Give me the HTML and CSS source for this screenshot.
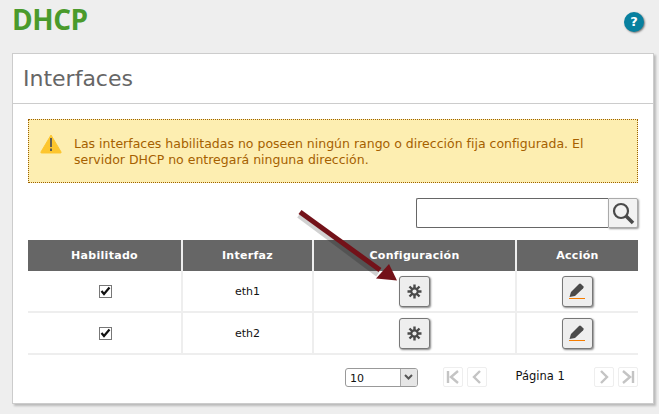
FILE: index.html
```html
<!DOCTYPE html>
<html lang="es">
<head>
<meta charset="utf-8">
<title>DHCP</title>
<link rel="stylesheet" href="styles.css">
</head>
<body>
<header class="top">
  <h1 class="title">DHCP</h1>
  <span class="help">?</span>
</header>
<section class="panel">
  <h2 class="panel-title">Interfaces</h2>
  <div class="panel-body">
    <div class="alert">
      <svg class="alert-icon" width="22" height="20" viewBox="0 0 24 20" preserveAspectRatio="none"><path d="M12 1 L23 18 Q23.500 19 22 19 L2 19 Q.5 19 1 18 Z" fill="#fdc62e" stroke="#fdc62e" stroke-linejoin="round"/><rect x="11" y="4" width="2" height="9" fill="#555"/><rect x="11" y="14.500" width="2" height="2.500" fill="#555"/></svg>
      <p class="alert-text">Las interfaces habilitadas no poseen ningún rango o dirección fija configurada. El servidor DHCP no entregará ninguna dirección.</p>
    </div>
    <div class="search">
      <input class="search-input" type="text" aria-label="Buscar">
      <button class="search-btn" aria-label="Buscar"><svg width="24" height="24" viewBox="0 0 24 24"><circle cx="10" cy="10" r="7" fill="none" stroke="#4a4a4a" stroke-width="2.200"/><path d="M15 15 L22 22" stroke="#4a4a4a" stroke-width="3.500"/></svg></button>
    </div>
    <table class="grid">
      <thead>
        <tr><th class="c1">Habilitado</th><th class="c2">Interfaz</th><th class="c3">Configuración</th><th class="c4">Acción</th></tr>
      </thead>
      <tbody>
        <tr>
          <td><span class="check"><svg width="11" height="10" viewBox="0 0 11 10"><path d="M1.500 5 L4 8 L9.500 1.500" fill="none" stroke="#111" stroke-width="2.200"/></svg></span></td>
          <td>eth1</td>
          <td><button class="icon-btn"><svg width="15" height="15" viewBox="0 0 15 15"><g stroke="#4a4a4a" stroke-width="2.400"><path d="M7.500 .5 V14.500 M.5 7.500 H14.500 M2.500 2.500 L12.500 12.500 M12.500 2.500 L2.500 12.500"/></g><circle cx="7.500" cy="7.500" r="4.200" fill="#4a4a4a"/><circle cx="7.500" cy="7.500" r="2.100" fill="#eee"/></svg></button></td>
          <td><button class="icon-btn"><svg width="17" height="17" viewBox="0 0 17 17"><path d="M0.500 14 L2 9 L10 1 Q11 0 12 1 L14.500 3.500 Q15 4.500 14 5.500 L6 13 Z" fill="#4a4a4a"/><path d="M0 15.500 H16" stroke="#f57c00" stroke-width="1"/></svg></button></td>
        </tr>
        <tr>
          <td><span class="check"><svg width="11" height="10" viewBox="0 0 11 10"><path d="M1.500 5 L4 8 L9.500 1.500" fill="none" stroke="#111" stroke-width="2.200"/></svg></span></td>
          <td>eth2</td>
          <td><button class="icon-btn"><svg width="15" height="15" viewBox="0 0 15 15"><g stroke="#4a4a4a" stroke-width="2.400"><path d="M7.500 .5 V14.500 M.5 7.500 H14.500 M2.500 2.500 L12.500 12.500 M12.500 2.500 L2.500 12.500"/></g><circle cx="7.500" cy="7.500" r="4.200" fill="#4a4a4a"/><circle cx="7.500" cy="7.500" r="2.100" fill="#eee"/></svg></button></td>
          <td><button class="icon-btn"><svg width="17" height="17" viewBox="0 0 17 17"><path d="M0.500 14 L2 9 L10 1 Q11 0 12 1 L14.500 3.500 Q15 4.500 14 5.500 L6 13 Z" fill="#4a4a4a"/><path d="M0 15.500 H16" stroke="#f57c00" stroke-width="1"/></svg></button></td>
        </tr>
      </tbody>
    </table>
    <div class="pager">
      <div class="select"><span class="select-value">10</span><span class="select-arrow"><svg width="9" height="6" viewBox="0 0 9 6"><path d="M1 1 L4.500 4.500 L8 1" fill="none" stroke="#555" stroke-width="2"/></svg></span></div>
      <div class="nav nav-left">
        <span class="nav-btn"><svg width="14" height="14" viewBox="0 0 14 14"><path d="M2 1 V13 M12 1 L5 7 L12 13" fill="none" stroke="#c4c4c4" stroke-width="2.400"/></svg></span>
        <span class="nav-btn"><svg width="14" height="14" viewBox="0 0 14 14"><path d="M10 1 L4 7 L10 13" fill="none" stroke="#c4c4c4" stroke-width="2.400"/></svg></span>
      </div>
      <span class="page-label">Página 1</span>
      <div class="nav">
        <span class="nav-btn"><svg width="14" height="14" viewBox="0 0 14 14"><path d="M4 1 L10 7 L4 13" fill="none" stroke="#c4c4c4" stroke-width="2.400"/></svg></span>
        <span class="nav-btn"><svg width="14" height="14" viewBox="0 0 14 14"><path d="M12 1 V13 M2 1 L9 7 L2 13" fill="none" stroke="#c4c4c4" stroke-width="2.400"/></svg></span>
      </div>
    </div>
  </div>
</section>
<svg class="arrow" width="110" height="90" viewBox="0 0 110 90">
  <path d="M-1 5 L78 64" stroke="#000" stroke-opacity=".18" stroke-width="6"/>
  <path d="M0 2 L80 60" stroke="#731219" stroke-width="5"/>
  <path d="M97 70.500 L76 68.500 L89 54 Z" fill="#731219"/>
</svg>
</body>
</html>
```
FILE: styles.css
```css
* { box-sizing: border-box; }
html, body { margin: 0; height: 414px; overflow: hidden; }
body { background: #eee; font-family: "DejaVu Sans", sans-serif; font-size: 11px; color: #111; position: relative; }
.top { height: 53px; display: flex; justify-content: space-between; padding: 0 15px 0 12px; }
.title { margin: 2px 0 0; font-size: 28px; line-height: 34px; font-weight: 700; color: #4a9a2c; font-family: "Open Sans", sans-serif; letter-spacing: -.5px; }
.help { margin-top: 12px; width: 20px; height: 20px; border-radius: 50%; background: #08809f; color: #fff; font-weight: 700; font-size: 13px; line-height: 20px; text-align: center; box-shadow: 1px 1px 2px #777; }
.panel { margin: 0 5px 0 12px; height: 351px; background: #fff; border: 1px solid #ccc; box-shadow: 2px 2px 2px #bbb; }
.panel-title { margin: 0; height: 50px; border-bottom: 1px solid #ccc; padding-left: 10px; font-weight: 400; font-size: 22px; line-height: 50px; color: #666; }
.panel-body { padding: 15px 15px 0; }
.alert { height: 64px; background: #fdeeb1; border: 1px dotted #9c6000; display: flex; align-items: flex-start; padding: 14px 10px 0 11px; gap: 12px; }
.alert-icon { flex: none; }
.alert-text { margin: 2px 0 0; color: #a56000; font-size: 12.5px; line-height: 16px; width: 535px; }
.search { display: flex; justify-content: flex-end; margin-top: 15px; }
.search-input { width: 192px; height: 30px; border: 1px solid #666; border-right: 0; border-radius: 2px 0 0 2px; background: #fff; padding: 0; }
.search-btn { width: 30px; height: 30px; padding: 0; border: 1px solid #aaa; border-radius: 0 2px 2px 0; background: #f2f2f2; box-shadow: 1px 1px 2px #999; display: flex; align-items: center; justify-content: center; }
.grid { margin-top: 12px; width: 610px; border-collapse: separate; border-spacing: 0; table-layout: fixed; }
.grid th { height: 31px; padding: 0; background: #666; color: #fff; font-size: 11px; font-weight: 700; letter-spacing: .3px; border-left: 2px solid #eee; }
.grid th:first-child, .grid td:first-child { border-left: 0; }
.grid td:first-child { padding-left: 2px; }
.c1 { width: 153px; }
.c2 { width: 131px; }
.c3 { width: 203px; }
.c4 { width: 123px; }
.grid td { height: 42px; padding: 0; text-align: center; border-left: 2px solid #eee; border-bottom: 2px solid #eee; font-size: 11px; vertical-align: middle; }
.check { display: inline-flex; width: 13px; height: 13px; border: 1px solid #777; align-items: center; justify-content: center; vertical-align: middle; background: #fff; }
.icon-btn { width: 31px; height: 31px; padding: 0; display: inline-flex; align-items: center; justify-content: center; vertical-align: middle; border: 1px solid #777; border-radius: 3px; background: #eee; box-shadow: 1px 1px 2px #888; }
.pager { display: flex; align-items: center; margin-top: 5px; padding-left: 317px; height: 34px; }
.select { width: 73px; height: 19px; border: 1px solid #999; border-radius: 3px; display: flex; justify-content: space-between; background: #fff; overflow: hidden; }
.select-value { padding-left: 4px; line-height: 19px; }
.select-arrow { width: 17px; background: #e6e6e6; border-left: 1px solid #aaa; display: flex; align-items: center; justify-content: center; }
.nav { display: flex; gap: 4px; }
.nav-left { margin-left: 25px; }
.nav-btn { width: 20px; height: 20px; border: 1px solid #eee; border-radius: 2px; display: flex; align-items: center; justify-content: center; }
.page-label { margin-left: 29px; width: 79px; margin-top: -3px; font-size: 11.5px; }
.arrow { position: absolute; left: 300px; top: 210px; overflow: visible; }
```
